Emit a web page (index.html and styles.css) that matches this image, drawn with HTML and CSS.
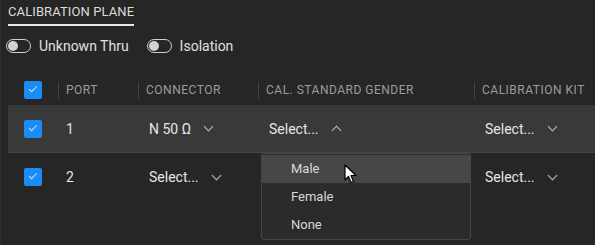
FILE: index.html
```html
<!DOCTYPE html>
<html lang="en">
<head>
    <meta charset="UTF-8">
    <meta name="viewport" content="width=device-width, initial-scale=1.0">
    <title>Calibration Plane</title>
    <link rel="stylesheet" href="styles.css">
</head>
<body>
    <div class="painel">
        <div class="abas">
            <span class="aba ativa">CALIBRATION PLANE</span>
        </div>

        <div class="opcoes">
            <label class="opcao"><span class="toggle"></span>Unknown Thru</label>
            <label class="opcao"><span class="toggle"></span>Isolation</label>
        </div>

        <div class="tabela">
            <div class="linha cabecalho">
                <div class="cel cel-check"><span class="check"></span></div>
                <div class="cel sep">PORT</div>
                <div class="cel sep">CONNECTOR</div>
                <div class="cel sep">CAL. STANDARD GENDER</div>
                <div class="cel sep">CALIBRATION KIT</div>
            </div>

            <div class="linha destaque">
                <div class="cel cel-check"><span class="check"></span></div>
                <div class="cel">1</div>
                <div class="cel"><span class="select">N 50 Ω<span class="seta"></span></span></div>
                <div class="cel menu-cel">
                    <span class="select">Select...<span class="seta cima"></span></span>
                    <div class="menu">
                        <div class="item hover">Male</div>
                        <div class="item">Female</div>
                        <div class="item">None</div>
                    </div>
                    <svg class="cursor" width="14" height="20" viewBox="0 0 14 20">
                        <path d="M1 1 L1 16 L4.5 12.5 L7 18.5 L9.5 17.5 L7 11.5 L12 11.5 Z" fill="#fff" stroke="#000" stroke-width="1.2" stroke-linejoin="round"/>
                    </svg>
                </div>
                <div class="cel"><span class="select">Select...<span class="seta"></span></span></div>
            </div>

            <div class="linha">
                <div class="cel cel-check"><span class="check"></span></div>
                <div class="cel">2</div>
                <div class="cel"><span class="select">Select...<span class="seta"></span></span></div>
                <div class="cel"></div>
                <div class="cel"><span class="select">Select...<span class="seta"></span></span></div>
            </div>
        </div>
    </div>
</body>
</html>
```

FILE: styles.css
```css
body {
    margin: 0;
    background-color: #262626;
    font-family: Roboto, "Liberation Sans", sans-serif;
    color: #e4e4e4;
}
.painel {
    height: 245px;
    padding: 0 0 0 7px;
    border-left: 1px solid #2e2e2e;
    box-sizing: border-box;
}
.abas {
    display: flex;
    padding-top: 4px;
}
.aba {
    font-size: 13px;
    color: #dcdcdc;
    padding: 0 0 5px;
    letter-spacing: 0.1px;
}
.aba.ativa {
    border-bottom: 2px solid #e6e6e6;
}
.opcoes {
    display: flex;
    gap: 18px;
    margin-top: 12px;
    margin-left: -2px;
    font-size: 14px;
}
.opcao {
    display: flex;
    align-items: center;
    gap: 8px;
    color: #e0e0e0;
}
.toggle {
    position: relative;
    width: 23px;
    height: 12px;
    border: 1.5px solid #d0d0d0;
    border-radius: 8px;
}
.toggle::after {
    content: "";
    position: absolute;
    left: 1px;
    top: 1px;
    width: 10px;
    height: 10px;
    border-radius: 50%;
    background-color: #d2d2d2;
}
.tabela {
    margin-top: 23px;
}
.linha {
    display: grid;
    grid-template-columns: 50px 80px 120px 216px 1fr;
    height: 48px;
    align-items: center;
    font-size: 14px;
}
.linha.cabecalho {
    height: 26px;
    margin-bottom: 2px;
    font-size: 12px;
    color: #9c9c9c;
    letter-spacing: 0.5px;
}
.linha.destaque {
    background-color: #393939;
    border-bottom: 1px solid #444;
    height: 47px;
}
.cel {
    position: relative;
    padding-left: 8px;
    white-space: nowrap;
}
.cel-check {
    padding-left: 16px;
    display: flex;
}
.sep::before {
    content: "";
    position: absolute;
    left: 0;
    top: -1px;
    height: 17px;
    border-left: 1px solid #444;
}
.check {
    position: relative;
    width: 18px;
    height: 18px;
    border-radius: 2px;
    background-color: #1a8cf5;
}
.check::after {
    content: "";
    position: absolute;
    left: 5px;
    top: 5px;
    width: 7px;
    height: 3px;
    border-left: 1.5px solid #cfe6ff;
    border-bottom: 1.5px solid #cfe6ff;
    transform: rotate(-45deg);
}
.select {
    display: inline-flex;
    align-items: center;
    padding-left: 3px;
    color: #e6e6e6;
}
.seta {
    width: 6px;
    height: 6px;
    margin-left: 14px;
    margin-top: -4px;
    border-right: 1.6px solid #bdbdbd;
    border-bottom: 1.6px solid #bdbdbd;
    transform: rotate(45deg);
}
.seta.cima {
    margin-top: 4px;
    transform: rotate(-135deg);
}
.menu {
    position: absolute;
    left: 3px;
    top: 32px;
    width: 208px;
    padding: 1px 0 0;
    background-color: #2b2b2b;
    border: 1px solid #474747;
    border-radius: 3px;
    z-index: 2;
}
.item {
    height: 28px;
    line-height: 27px;
    padding-left: 29px;
    font-size: 13px;
    color: #d8d8d8;
}
.item.hover {
    background-color: #474747;
}
.cursor {
    position: absolute;
    left: 86px;
    top: 43px;
    z-index: 3;
}
```
